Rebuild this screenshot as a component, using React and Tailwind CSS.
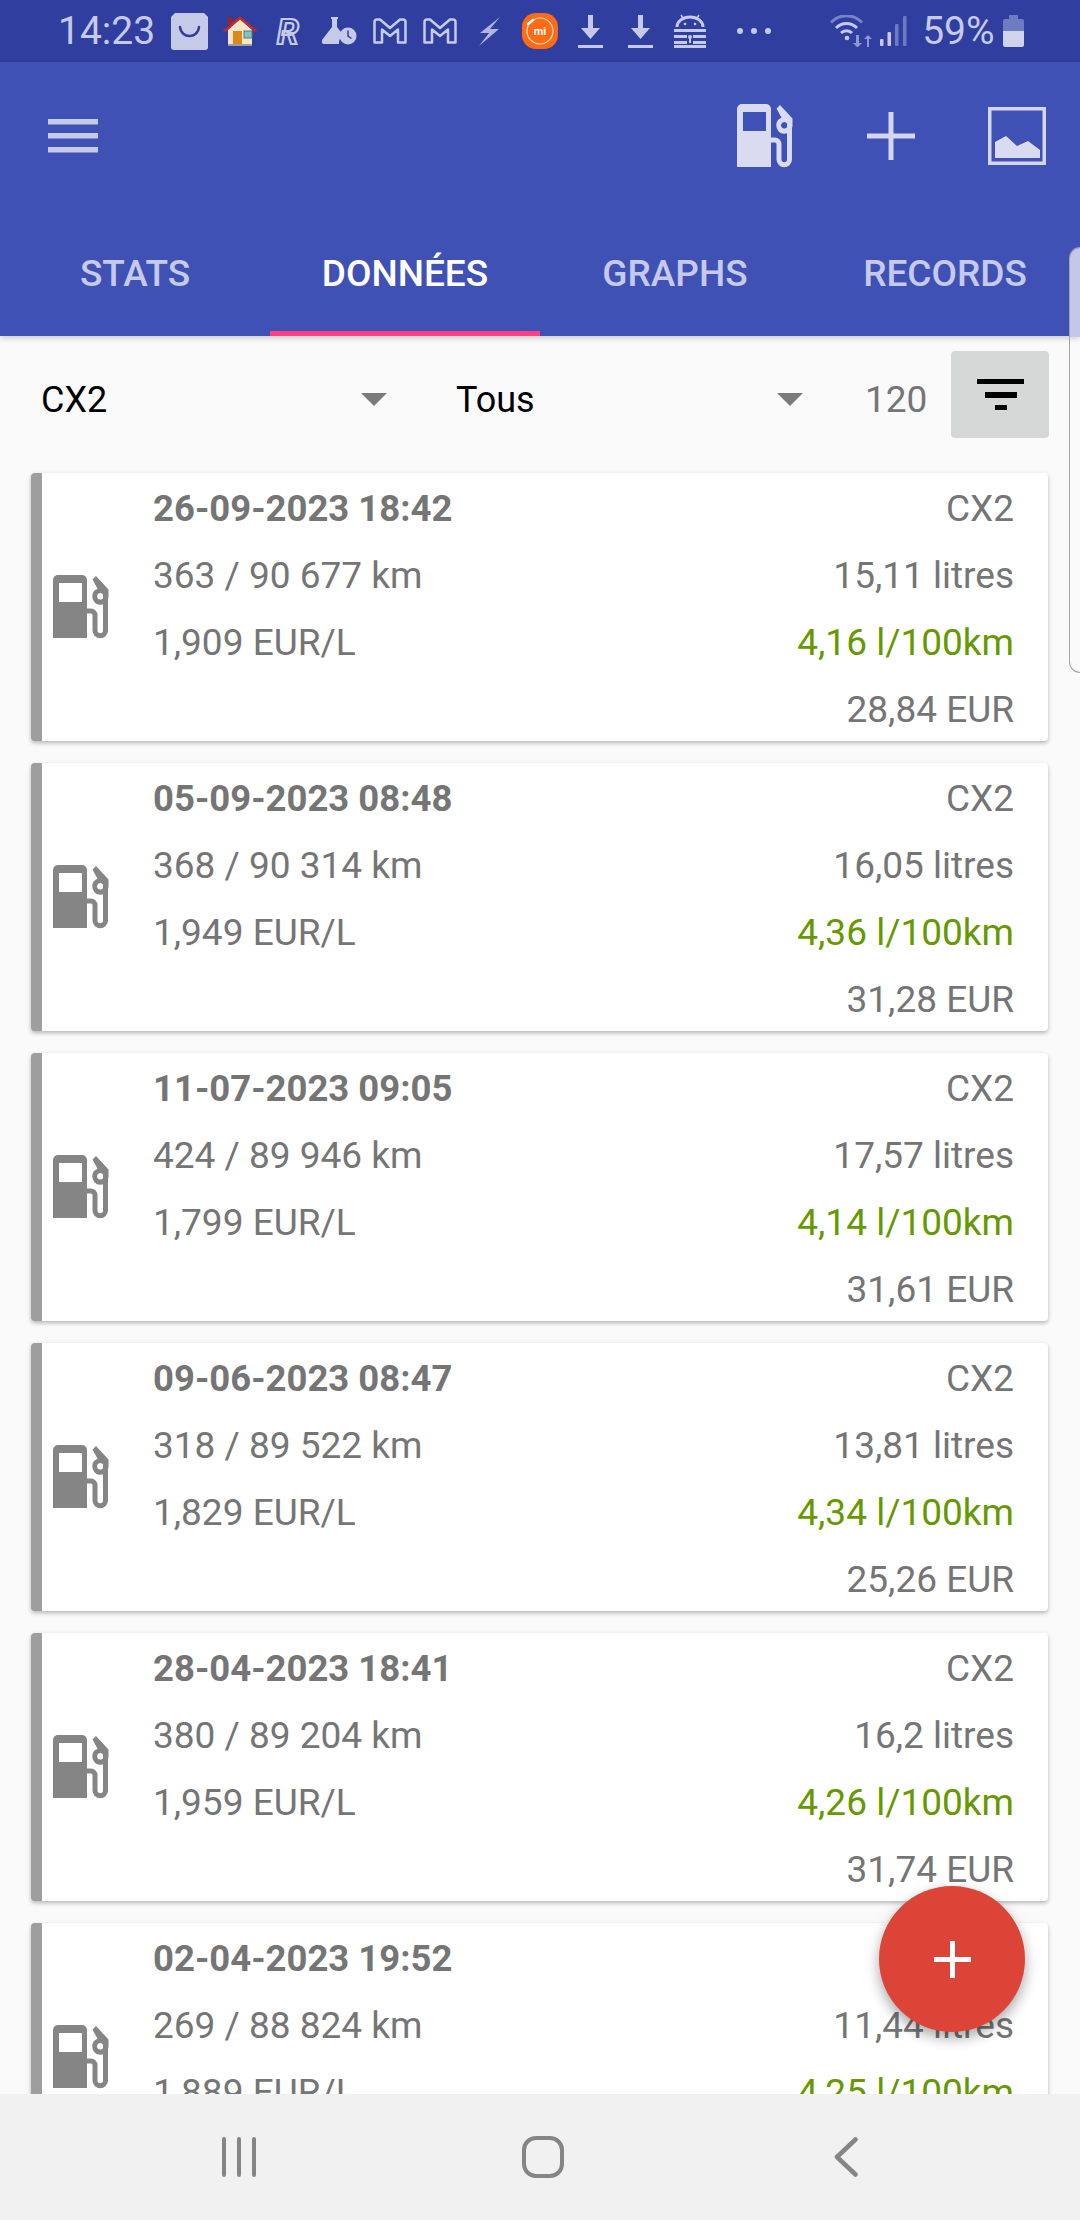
const entries = [
  { date: '26-09-2023 18:42', km: '363 / 90 677 km', price: '1,909 EUR/L', litres: '15,11 litres', conso: '4,16 l/100km', cost: '28,84 EUR' },
  { date: '05-09-2023 08:48', km: '368 / 90 314 km', price: '1,949 EUR/L', litres: '16,05 litres', conso: '4,36 l/100km', cost: '31,28 EUR' },
  { date: '11-07-2023 09:05', km: '424 / 89 946 km', price: '1,799 EUR/L', litres: '17,57 litres', conso: '4,14 l/100km', cost: '31,61 EUR' },
  { date: '09-06-2023 08:47', km: '318 / 89 522 km', price: '1,829 EUR/L', litres: '13,81 litres', conso: '4,34 l/100km', cost: '25,26 EUR' },
  { date: '28-04-2023 18:41', km: '380 / 89 204 km', price: '1,959 EUR/L', litres: '16,2 litres', conso: '4,26 l/100km', cost: '31,74 EUR' },
  { date: '02-04-2023 19:52', km: '269 / 88 824 km', price: '1,889 EUR/L', litres: '11,44 litres', conso: '4,25 l/100km', cost: '' },
];

const tabs = ['STATS', 'DONNÉES', 'GRAPHS', 'RECORDS'];

function Pump({ className }) {
  return (
    <svg viewBox="0 0 57 64" className={className}>
      <path fill="currentColor" fillRule="evenodd" d="M1 63V5a5 5 0 0 1 5-5h24a5 5 0 0 1 5 5v58z M7 8v19h23V8z" />
      <path fill="none" stroke="currentColor" strokeWidth="5" d="M35 36h4a4 4 0 0 1 4 4v15.400a5.250 5.250 0 0 0 10.500 0V20" />
      <path fill="currentColor" fillRule="evenodd" d="M40.500 4.500L44 1l12.500 13.500V22A8 8 0 0 1 40.300 21.300A8 8 0 0 1 45.500 13.800Z M48.300 18a3.300 3.300 0 1 0 .01 0z" />
    </svg>
  );
}

function Spinner({ label, className }) {
  return (
    <div className={`flex items-center justify-between ${className}`}>
      <span className="text-[36px] text-black">{label}</span>
      <svg viewBox="0 0 26 13" className="w-[26px] h-[13px] -mt-[1px]">
        <path d="M0 0h26L13 13z" fill="#7b7b7b" />
      </svg>
    </div>
  );
}

function Card({ e }) {
  return (
    <div className="shrink-0 h-[268px] ml-[31px] mr-[32px] flex items-center bg-white rounded-[4px] border-l-[11px] border-[#9e9e9e] shadow-[0_2px_4px_rgba(0,0,0,0.28)] text-[37px] leading-[67px] text-[#757575]">
      <Pump className="w-[57px] h-[64px] ml-[10px] text-[#858585] shrink-0" />
      <div className="ml-[44px] h-full pt-[2px]">
        <div className="font-bold text-[36.5px]">{e.date}</div>
        <div>{e.km}</div>
        <div>{e.price}</div>
      </div>
      <div className="ml-auto mr-[34px] h-full pt-[2px] text-right">
        <div>CX2</div>
        <div>{e.litres}</div>
        <div className="text-[#669900]">{e.conso}</div>
        <div>{e.cost}</div>
      </div>
    </div>
  );
}

function StatusIcons() {
  return (
    <>
      {/* bag */}
      <svg viewBox="0 0 37 37" className="w-[37px] h-[37px] ml-[16px] shrink-0">
        <path d="M4 0h29l4 4v30a3 3 0 0 1-3 3H3a3 3 0 0 1-3-3V4z" fill="#c5cae9" />
        <path d="M9 14c1 12 18 12 19 0" fill="none" stroke="#303f9f" strokeWidth="2.500" strokeLinecap="round" />
      </svg>
      {/* house */}
      <svg viewBox="0 0 34 30" className="w-[34px] h-[30px] ml-[15px] shrink-0">
        <rect x="5" y="1" width="4" height="7" fill="#a12020" />
        <path d="M5 14L17 3l12 11v16H5z" fill="#f5e6c8" />
        <path d="M0 14.500L17 0l17 14.500-2 1.500L17 3.500 2 16z" fill="#c62828" />
        <rect x="10" y="15" width="9" height="14" fill="#d98a1a" />
        <rect x="21" y="15" width="8" height="7" fill="#7fc4c4" stroke="#5a7a6a" />
        <rect x="5" y="28" width="24" height="2" fill="#9e9e9e" />
      </svg>
      {/* revolut */}
      <svg viewBox="0 0 32 36" className="w-[32px] h-[36px] ml-[16px] -mr-[4px] shrink-0 overflow-visible">
        <text x="15" y="31" textAnchor="middle" fontFamily="Roboto, sans-serif" fontWeight="700" fontStyle="italic" fontSize="35" fill="none" stroke="#c5cae9" strokeWidth="2.200">R</text>
      </svg>
      {/* flask and clock */}
      <svg viewBox="0 0 36 28" className="w-[36px] h-[28px] ml-[21px] shrink-0">
        <path d="M9 0h7v2h-1v8l7 9c-4 1-5 4-5 8H2c-2 0-3-2-2-4l10-13V2H9z" fill="#c5cae9" />
        <circle cx="26" cy="19" r="8.500" fill="#c5cae9" />
        <path d="M26 13.500V19l3.500 2.500" fill="none" stroke="#303f9f" strokeWidth="1.500" />
      </svg>
      {/* mail x2 */}
      {['ml-[15px]', 'ml-[16px]'].map(m => (
        <svg key={m} viewBox="0 0 34 26" className={`w-[34px] h-[26px] shrink-0 ${m}`}>
          <path d="M1.500 4Q1.500 1.500 4 1.500H7L17 10 27 1.500h3Q32.500 1.500 32.500 4V24.500H25V11.500L17 18 9 11.500V24.500H1.500Z" fill="none" stroke="#c5cae9" strokeWidth="2.500" strokeLinejoin="round" />
        </svg>
      ))}
      {/* bolt */}
      <svg viewBox="0 0 22 29" className="w-[22px] h-[29px] ml-[22px] shrink-0">
        <path d="M21 0L1 16h9L0 29 20 12h-9z" fill="#c5cae9" opacity="0.85" />
      </svg>
      {/* mi */}
      <svg viewBox="0 0 36 36" className="w-[36px] h-[36px] ml-[21px] shrink-0">
        <rect width="36" height="36" rx="14" fill="#ff6a13" />
        <circle cx="18" cy="18" r="13" fill="none" stroke="#ffe3d2" strokeWidth="1.200" />
        <path d="M6 11l5-4" stroke="#fff" strokeWidth="2.500" strokeLinecap="round" />
        <text x="18" y="22" textAnchor="middle" fontFamily="Roboto, sans-serif" fontWeight="700" fontSize="11" fill="#fff">mi</text>
      </svg>
      {/* downloads */}
      {['ml-[20px]', 'ml-[25px]'].map(m => (
        <svg key={m} viewBox="0 0 25 33" className={`w-[25px] h-[33px] shrink-0 ${m}`}>
          <path d="M10 0h5v13h7l-9.500 11L3 13h7z M0 30h25v3H0z" fill="#c5cae9" />
        </svg>
      ))}
      {/* keepass */}
      <svg viewBox="0 0 32 34" className="w-[32px] h-[34px] ml-[21px] shrink-0">
        <path d="M7 1l2.500 4M25 1l-2.500 4" stroke="#c5cae9" strokeWidth="1.500" />
        <path d="M3 13a13 10 0 0 1 26 0" fill="none" stroke="#c5cae9" strokeWidth="3" />
        <circle cx="11" cy="10" r="1.300" fill="#c5cae9" />
        <circle cx="21" cy="10" r="1.300" fill="#c5cae9" />
        <path d="M0 15h32v3H0z M0 21h13v3H0z M19 21h13v3H19z M0 27h13v3H0z M19 27h13v3H19z M0 31h32v3H0z" fill="#c5cae9" />
        <circle cx="16" cy="23" r="2" fill="#c5cae9" />
        <rect x="15" y="23" width="2" height="6" fill="#c5cae9" />
      </svg>
      {/* more */}
      <svg viewBox="0 0 34 6" className="w-[34px] h-[6px] ml-[31px] shrink-0">
        <circle cx="3" cy="3" r="3" fill="#c5cae9" />
        <circle cx="17" cy="3" r="3" fill="#c5cae9" />
        <circle cx="31" cy="3" r="3" fill="#c5cae9" />
      </svg>
      {/* wifi */}
      <svg viewBox="0 0 42 32" className="w-[42px] h-[32px] ml-[59px] shrink-0">
        <path d="M1 7.500c9-9 22-9 31 0" fill="none" stroke="#7884c6" strokeWidth="3" />
        <path d="M6 13c6-6 15-6 21 0" fill="none" stroke="#c5cae9" strokeWidth="3" />
        <path d="M11 18c3-3 8-3 11 0" fill="none" stroke="#c5cae9" strokeWidth="3" />
        <circle cx="17" cy="23" r="2.300" fill="#c5cae9" />
        <path d="M26 20v8h-3l4.500 4.500 4.500-4.500h-3v-8z" fill="#8d98d2" />
        <path d="M37 32v-8h-3l4-4 4 4h-3v8z" fill="#8d98d2" />
      </svg>
      {/* signal */}
      <svg viewBox="0 0 27 30" className="w-[27px] h-[30px] ml-[8px] shrink-0">
        <rect x="0" y="23" width="3.500" height="7" rx="1" fill="#c5cae9" />
        <rect x="7.500" y="16" width="3.500" height="14" rx="1" fill="#c5cae9" />
        <rect x="15" y="8" width="3.500" height="22" rx="1" fill="#6f7bc0" />
        <rect x="23" y="0" width="3.500" height="30" rx="1" fill="#6f7bc0" />
      </svg>
      <span className="ml-[15px] text-[39px] leading-none text-[#c5cae9]">59%</span>
      {/* battery */}
      <svg viewBox="0 0 21 32" className="w-[21px] h-[32px] ml-[8px] shrink-0">
        <path d="M6 0h9v4h4a2 2 0 0 1 2 2v10H0V6a2 2 0 0 1 2-2h4z" fill="#6f7bc0" />
        <path d="M0 16h21v14a2 2 0 0 1-2 2H2a2 2 0 0 1-2-2z" fill="#cfd3ec" />
      </svg>
    </>
  );
}

export default function App() {
  return (
    <div className="relative w-[1080px] h-[2220px] overflow-hidden flex flex-col bg-[#fafafa] font-['Roboto',sans-serif]">
      <div className="h-[62px] shrink-0 flex items-center pl-[58px] bg-[#303f9f]">
        <span className="text-[39px] leading-none text-[#c5cae9]">14:23</span>
        <StatusIcons />
      </div>

      <div className="shrink-0 bg-[#3f51b5] shadow-[0_2px_6px_rgba(0,0,0,0.2)] z-10">
        <div className="h-[148px] flex items-center pl-[48px] pr-[34px]">
          <svg viewBox="0 0 50 34" className="w-[50px] h-[34px]">
            <path d="M0 0h50v5.500H0z M0 14h50v5.500H0z M0 28h50v5.500H0z" fill="#c5cae9" />
          </svg>
          <Pump className="w-[57px] h-[64px] ml-auto text-[#d9dcf0]" />
          <svg viewBox="0 0 48 48" className="w-[48px] h-[48px] ml-[74px]">
            <path d="M21.500 0h5v21.500H48v5H26.500V48h-5V26.500H0v-5h21.500z" fill="#d3d7ee" />
          </svg>
          <svg viewBox="0 0 58 58" className="w-[58px] h-[58px] ml-[73px]">
            <path d="M1.750 1.750h54.500v54.500H1.750z" fill="none" stroke="#d3d7ee" strokeWidth="3.500" />
            <path d="M7 35l11-6 11 10 11-5 12 9v8H7z" fill="#d9dcf0" />
          </svg>
        </div>
        <div className="h-[126px] pt-[7px] flex">
          {tabs.map((t, i) => (
            <div
              key={t}
              className={`w-[270px] flex items-center justify-center text-[37px] font-medium border-b-[5px] ${i === 1 ? 'border-[#ff4081] text-white' : 'border-transparent text-[#c5cae9]'}`}
            >
              {t}
            </div>
          ))}
        </div>
      </div>

      <div className="h-[128px] shrink-0 flex items-center pl-[41px] pr-[31px]">
        <Spinner label="CX2" className="w-[346px]" />
        <Spinner label="Tous" className="w-[347px] ml-[69px]" />
        <span className="ml-[62px] text-[37px] text-[#757575]">120</span>
        <div className="ml-auto w-[98px] h-[87px] mb-[11px] rounded-[4px] bg-[#d6d7d7] flex items-center justify-center">
          <svg viewBox="0 0 47 31" className="w-[47px] h-[31px]">
            <path d="M0 0h47v5H0z M8 13h32v6H8z M18 26h12v5H18z" fill="#000" />
          </svg>
        </div>
      </div>

      <div className="flex-1 min-h-0 overflow-hidden flex flex-col gap-[22px] pt-[9px]">
        {entries.map(e => <Card key={e.date} e={e} />)}
      </div>

      <div className="h-[126px] shrink-0 bg-[#f1f1f1] flex items-center pl-[222px]">
        <svg viewBox="0 0 34 40" className="w-[34px] h-[40px]">
          <path d="M2 2v36M17 2v36M32 2v36" stroke="#858585" strokeWidth="4" strokeLinecap="round" />
        </svg>
        <svg viewBox="0 0 42 42" className="w-[42px] h-[42px] ml-[266px]">
          <rect x="2" y="2" width="38" height="38" rx="12" fill="none" stroke="#858585" strokeWidth="4" />
        </svg>
        <svg viewBox="0 0 24 40" className="w-[24px] h-[40px] ml-[270px]">
          <path d="M21.500 2.500L3 20l18.500 17.500" fill="none" stroke="#858585" strokeWidth="4.500" strokeLinecap="round" strokeLinejoin="round" />
        </svg>
      </div>

      {/* edge panel handle */}
      <div className="absolute top-[247px] right-0 w-[11px] h-[426px] z-20 overflow-hidden rounded-l-[14px] border-l border-y border-[#a3a3a3]">
        <div className="h-[89px] bg-[#c3c8e8]" />
      </div>

      <div className="absolute right-[55px] bottom-[188px] w-[146px] h-[146px] rounded-full bg-[#db4437] shadow-[0_6px_14px_rgba(0,0,0,0.35)] z-20 flex items-center justify-center">
        <svg viewBox="0 0 37 37" className="w-[37px] h-[37px]">
          <path d="M16 0h5v16h16v5H21v16h-5V21H0v-5h16z" fill="#fff" />
        </svg>
      </div>
    </div>
  );
}
